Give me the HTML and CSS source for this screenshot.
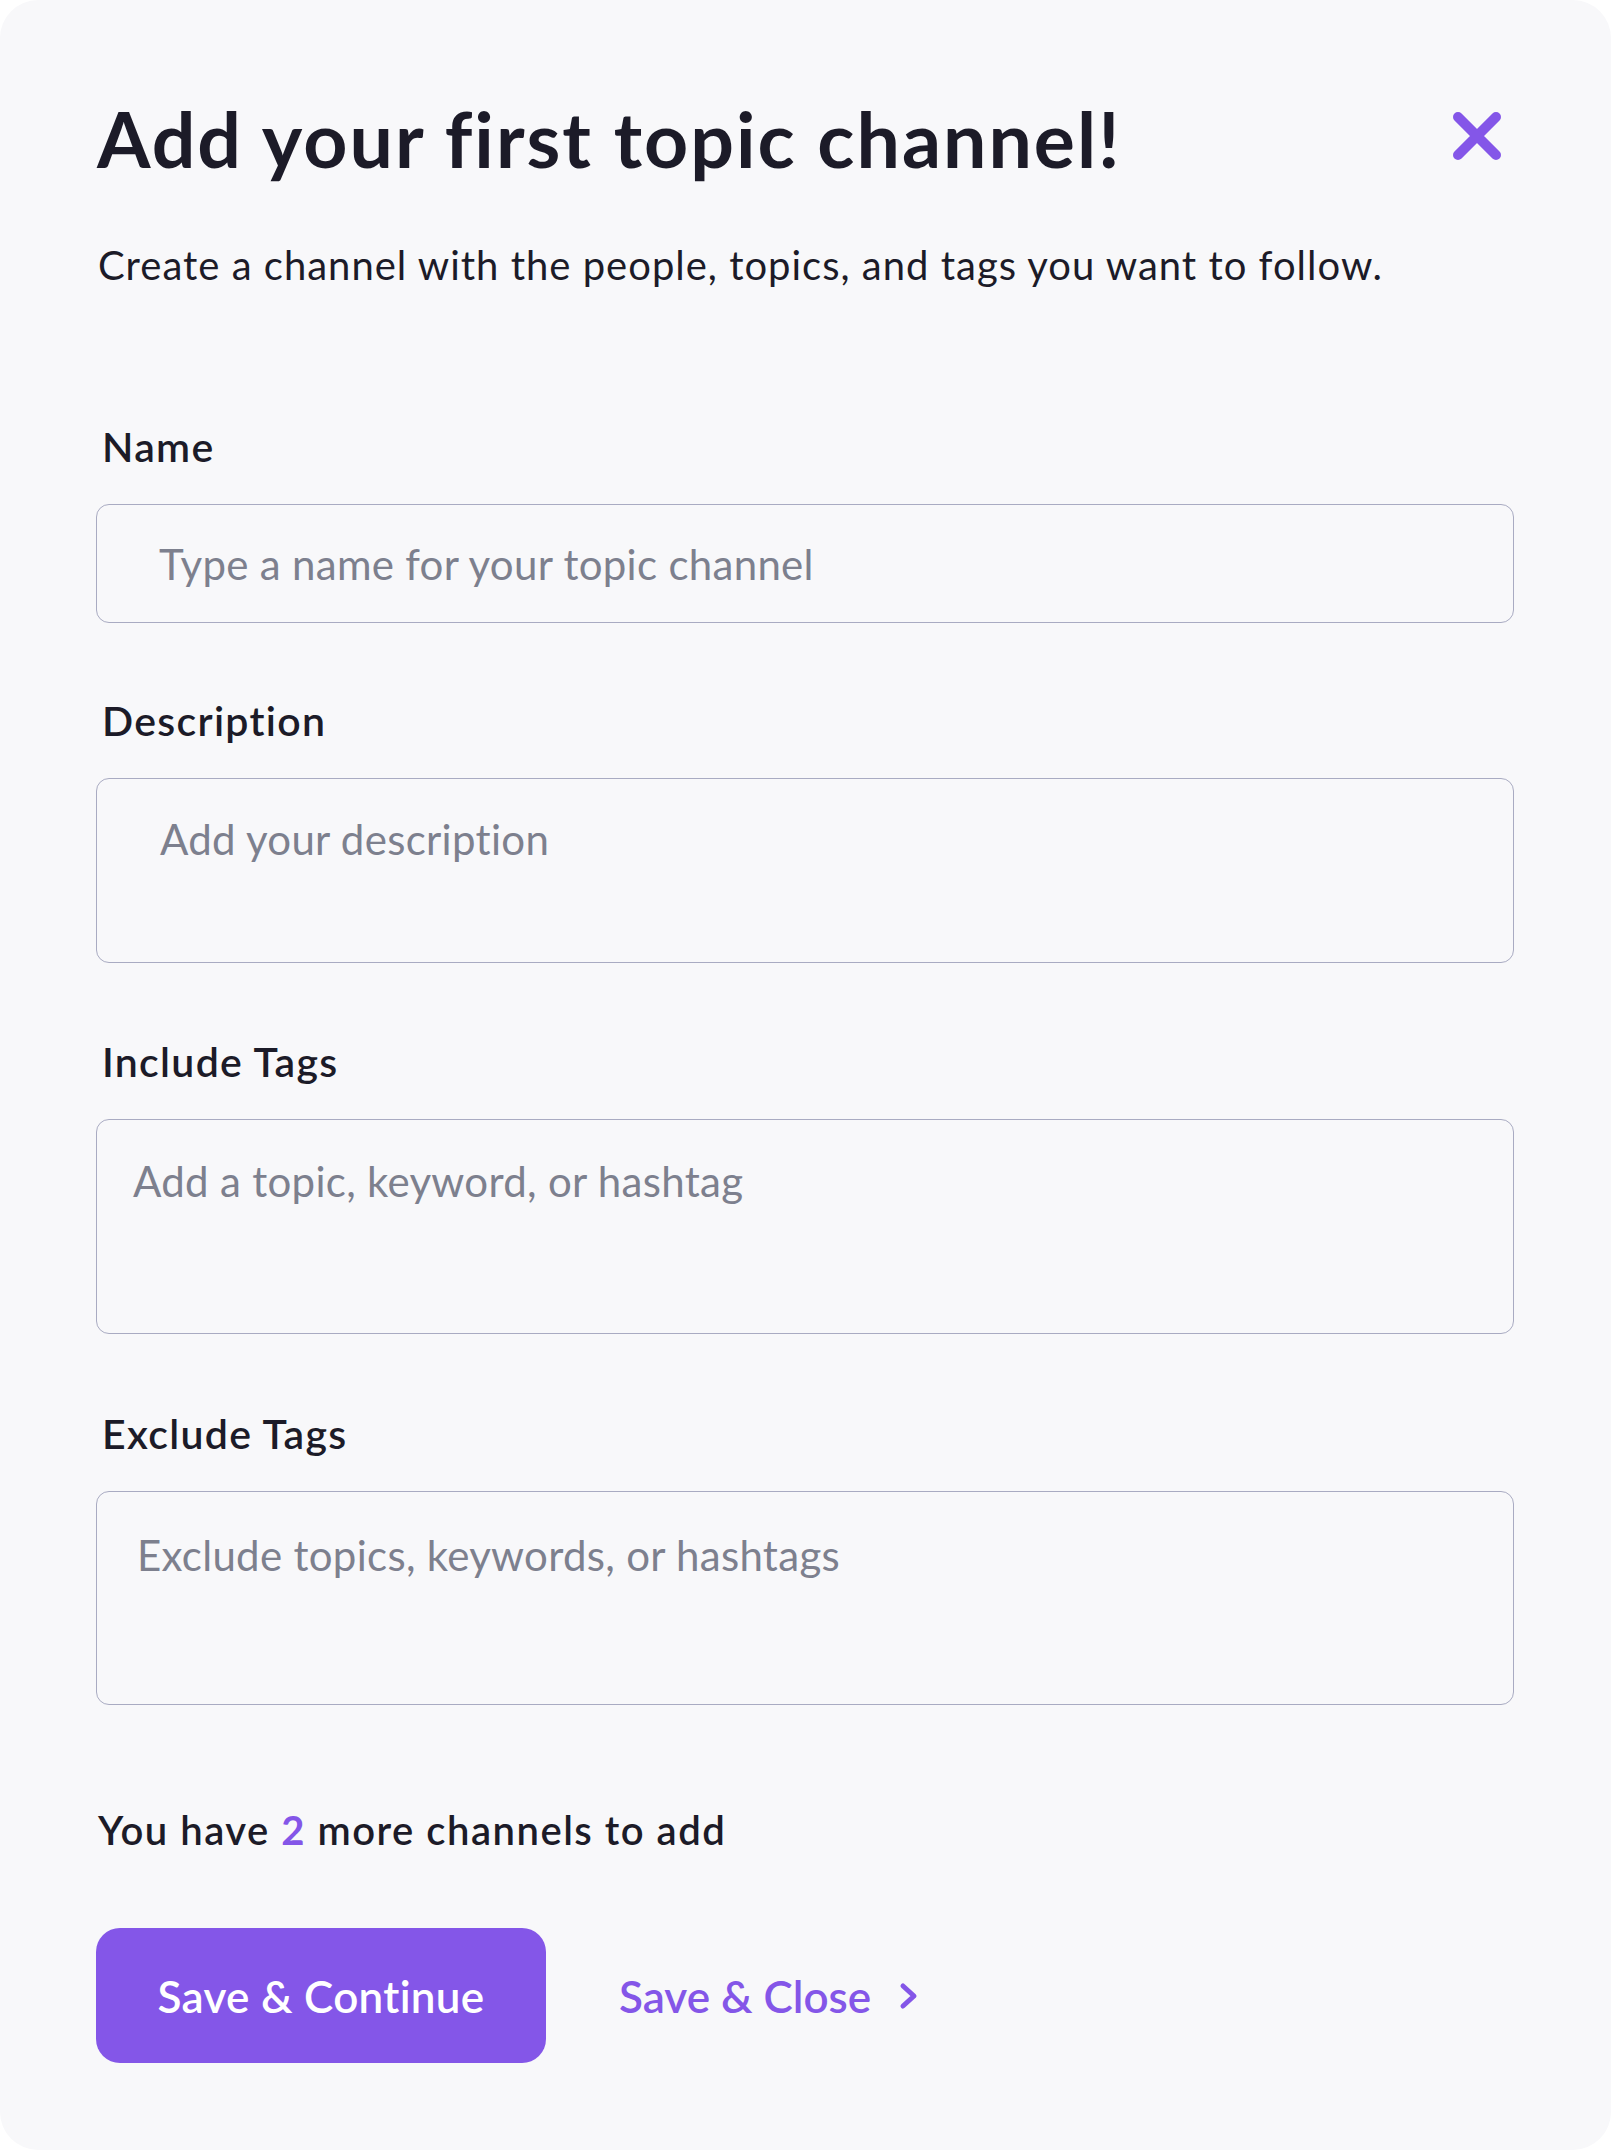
FILE: index.html
```html
<!DOCTYPE html>
<html lang="en">
<head>
<meta charset="utf-8">
<title>Add your first topic channel</title>
<link rel="stylesheet" href="styles.css">
</head>
<body>
<div class="card">
  <div class="head">
    <h1 class="title">Add your first topic channel!</h1>
    <button class="close" aria-label="Close">
      <svg width="48" height="48" viewBox="0 0 48 48"><path d="M5 5 L43 43 M43 5 L5 43" stroke="#8456e8" stroke-width="10" stroke-linecap="round" fill="none"/></svg>
    </button>
  </div>
  <p class="subtitle">Create a channel with the people, topics, and tags you want to follow.</p>

  <label class="label label-first">Name</label>
  <input class="field field-name" type="text" placeholder="Type a name for your topic channel">

  <label class="label">Description</label>
  <textarea class="field area area-desc" placeholder="Add your description"></textarea>

  <label class="label label-inc">Include Tags</label>
  <textarea class="field area area-inc" placeholder="Add a topic, keyword, or hashtag"></textarea>

  <label class="label label-exc">Exclude Tags</label>
  <textarea class="field area area-exc" placeholder="Exclude topics, keywords, or hashtags"></textarea>

  <p class="remaining">You have <span class="count">2</span> more channels to add</p>

  <div class="actions">
    <button class="btn-primary">Save &amp; Continue</button>
    <button class="btn-link">Save &amp; Close
      <svg width="22" height="28" viewBox="0 0 22 28"><path d="M5 4 L16 14 L5 24" stroke="#8456e8" stroke-width="5" stroke-linecap="round" stroke-linejoin="round" fill="none"/></svg>
    </button>
  </div>
</div>
</body>
</html>
```

FILE: styles.css
```css
* { box-sizing: border-box; }
html, body { margin: 0; padding: 0; background: #ffffff; }
body {
  font-family: "Lato", "Liberation Sans", sans-serif;
  color: #1c1b28;
  font-variant-ligatures: no-common-ligatures no-discretionary-ligatures;
}

.card {
  width: 1611px;
  min-height: 2150px;
  background: #f8f8fa;
  border-radius: 38px;
  padding: 100px 97px 0 96px;
  display: flex;
  flex-direction: column;
}

.head {
  display: flex;
  justify-content: space-between;
  align-items: flex-start;
}
.title {
  margin: 0 0 0 1px;
  font-size: 77px;
  line-height: 77px;
  font-weight: 700;
  letter-spacing: 2px;
  font-variant-ligatures: common-ligatures;
}
.close {
  margin: 12px 13px 0 0;
  padding: 0;
  border: 0;
  background: none;
  width: 48px;
  height: 48px;
}
.close svg { display: block; }

.subtitle {
  margin: 64px 0 0 2px;
  font-size: 40px;
  line-height: 48px;
  font-weight: 400;
  letter-spacing: 1px;
}

.label {
  display: block;
  margin: 74px 0 33px 6px;
  font-size: 41px;
  line-height: 48px;
  font-weight: 600;
  letter-spacing: 1.3px;
}
.label-first { margin-top: 134px; }
.label-inc { margin-top: 75px; }
.label-exc { margin-top: 76px; }

.field {
  display: block;
  width: 100%;
  border: 1.5px solid #a9abc2;
  border-radius: 13px;
  background: #f8f8fa;
  font-family: "Lato", "Liberation Sans", sans-serif;
  font-size: 42px;
  letter-spacing: 0.3px;
  color: #1c1b28;
  outline: none;
  resize: none;
  font-variant-ligatures: none;
}
.field::placeholder { color: #7d808e; opacity: 1; }

.field-name {
  height: 119px;
  padding: 0 0 0 62px;
}
.area {
  line-height: 50px;
  overflow: hidden;
}
.area-desc { height: 185px; padding: 35px 0 0 63px; }
.area-inc { height: 215px; padding: 36px 0 0 36px; }
.area-exc { height: 214px; padding: 38px 0 0 40px; }

.remaining {
  margin: 101px 0 0 2px;
  font-size: 40px;
  line-height: 48px;
  font-weight: 600;
  letter-spacing: 1.5px;
}
.count { color: #8456e8; font-weight: 700; }

.actions {
  margin-top: 74px;
  display: flex;
  align-items: center;
  gap: 73px;
}
.btn-primary {
  width: 450px;
  height: 135px;
  border: 0;
  border-radius: 24px;
  background: #8456e8;
  color: #ffffff;
  font-family: "Lato", "Liberation Sans", sans-serif;
  font-size: 44px;
  font-weight: 600;
  letter-spacing: 0.3px;
  padding: 0;
}
.btn-link {
  display: flex;
  align-items: center;
  gap: 27px;
  border: 0;
  background: none;
  padding: 0;
  color: #8456e8;
  font-family: "Lato", "Liberation Sans", sans-serif;
  font-size: 44px;
  font-weight: 600;
}
.btn-link svg { display: block; }
```
